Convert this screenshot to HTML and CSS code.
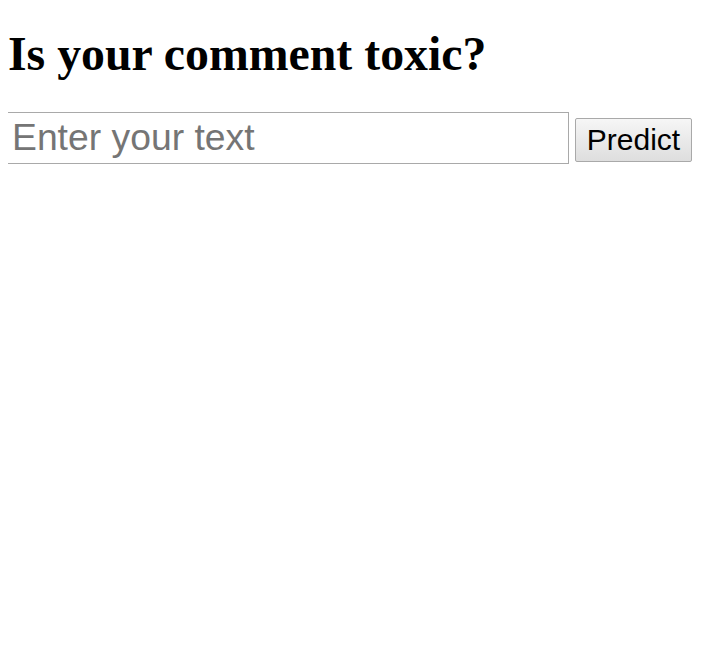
FILE: index.html
```html
<!DOCTYPE html>
<html>
<head>
<meta charset="utf-8">
<link rel="stylesheet" href="styles.css">
</head>
<body>
<h1 class="title">Is your comment toxic?</h1>
<form class="form">
<input class="text-input" type="text" placeholder="Enter your text">
<button class="btn" type="button">Predict</button>
</form>
</body>
</html>
```
FILE: styles.css
```css
html, body {
  background: #ffffff;
}
body {
  margin: 8px;
  font-family: "Liberation Serif", serif;
}
.title {
  font-family: "Liberation Serif", serif;
  font-weight: bold;
  font-size: 47.8px;
  margin: 19px 0 30px 0;
  line-height: 1.15;
  color: #000;
}
.form {
  display: flex;
  align-items: flex-end;
  gap: 6px;
}
.text-input {
  box-sizing: border-box;
  width: 562px;
  height: 52px;
  margin: 0 0 0 -1px;
  padding: 0 4px;
  border: 1px solid #a9a9a9;
  font-family: "Liberation Sans", Arial, sans-serif;
  font-size: 37.3px;
  color: #000;
  outline: none;
}
.text-input::placeholder {
  color: #757575;
}
.btn {
  box-sizing: border-box;
  height: 44px;
  width: 117px;
  margin-bottom: 2px;
  padding: 0 8px;
  font-family: "Liberation Sans", Arial, sans-serif;
  font-size: 30px;
  color: #000;
  background: linear-gradient(#f6f6f6, #dedede);
  border: 1px solid #a9a9a9;
  border-radius: 2px;
}
```
